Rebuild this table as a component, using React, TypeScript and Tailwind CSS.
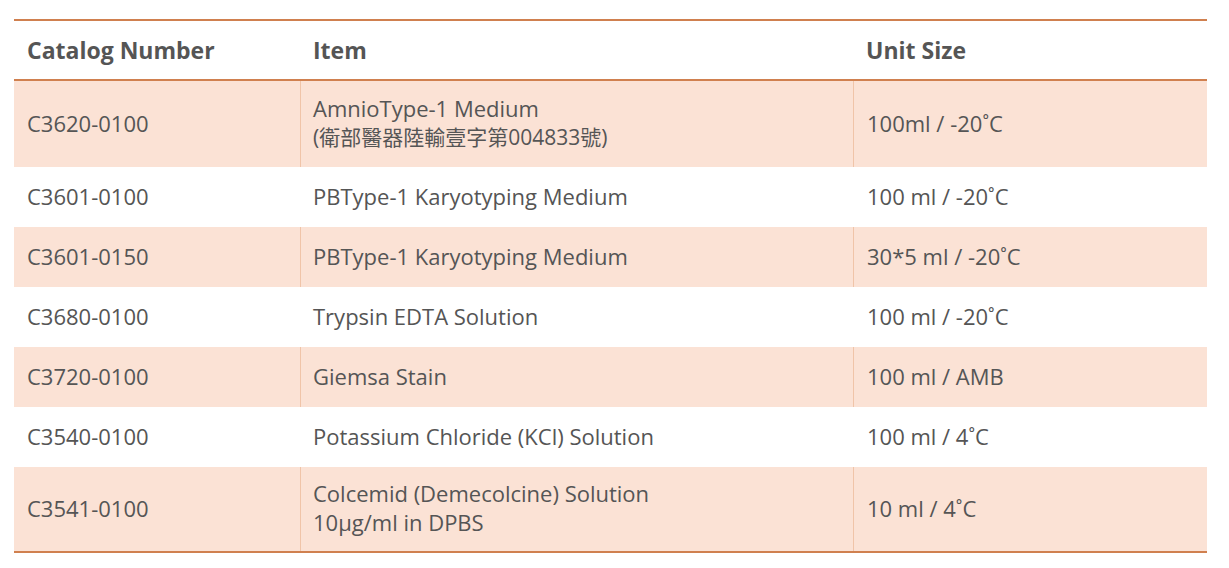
import React from "react";

type Row = { cat: string; item: React.ReactNode; unit: string; shaded: boolean; h: string };

const rows: Row[] = [
  {
    cat: "C3620-0100",
    item: (
      <>
        <div>AmnioType-1 Medium</div>
        <div className="text-[21px]">(衛部醫器陸輸壹字第004833號)</div>
      </>
    ),
    unit: "100ml / -20˚C",
    shaded: true,
    h: "h-[86px]",
  },
  { cat: "C3601-0100", item: "PBType-1 Karyotyping Medium", unit: "100 ml / -20˚C", shaded: false, h: "h-[60px]" },
  { cat: "C3601-0150", item: "PBType-1 Karyotyping Medium", unit: "30*5 ml / -20˚C", shaded: true, h: "h-[60px]" },
  { cat: "C3680-0100", item: "Trypsin EDTA Solution", unit: "100 ml / -20˚C", shaded: false, h: "h-[60px]" },
  { cat: "C3720-0100", item: "Giemsa Stain", unit: "100 ml / AMB", shaded: true, h: "h-[60px]" },
  { cat: "C3540-0100", item: "Potassium Chloride (KCl) Solution", unit: "100 ml / 4˚C", shaded: false, h: "h-[60px]" },
  {
    cat: "C3541-0100",
    item: (
      <>
        <div>Colcemid (Demecolcine) Solution</div>
        <div>10μg/ml in DPBS</div>
      </>
    ),
    unit: "10 ml / 4˚C",
    shaded: true,
    h: "h-[84px]",
  },
];

export default function App() {
  return (
    <div
      className="w-[1229px] h-[568px] bg-white pt-[19px] px-[14px] text-[#555555]"
      style={{ fontFamily: '"Open Sans", "Noto Sans CJK TC", sans-serif' }}
    >
      <div className="w-[1193px] border-t-2 border-b-2 border-[#d0804f]">
        <div className="grid grid-cols-[286px_553px_354px] h-[60px] border-b-2 border-[#d0804f] items-center text-[23px] font-bold">
          <div className="pl-[13px]">Catalog Number</div>
          <div className="pl-[13px]">Item</div>
          <div className="pl-[13px]">Unit Size</div>
        </div>
        {rows.map((r, i) => (
          <div
            key={i}
            className={`grid grid-cols-[286px_553px_354px] ${r.h} text-[22px] leading-[29px] ${r.shaded ? "bg-[#fbe2d5]" : "bg-white"}`}
          >
            <div className="pl-[13px] pb-[2px] flex flex-col justify-center">{r.cat}</div>
            <div
              className={`pl-[12px] pb-[2px] flex flex-col justify-center border-l ${r.shaded ? "border-[#f0c4a8]" : "border-white"}`}
            >
              {r.item}
            </div>
            <div
              className={`pl-[13px] pb-[2px] flex flex-col justify-center border-l ${r.shaded ? "border-[#f0c4a8]" : "border-white"}`}
            >
              {r.unit}
            </div>
          </div>
        ))}
      </div>
    </div>
  );
}
